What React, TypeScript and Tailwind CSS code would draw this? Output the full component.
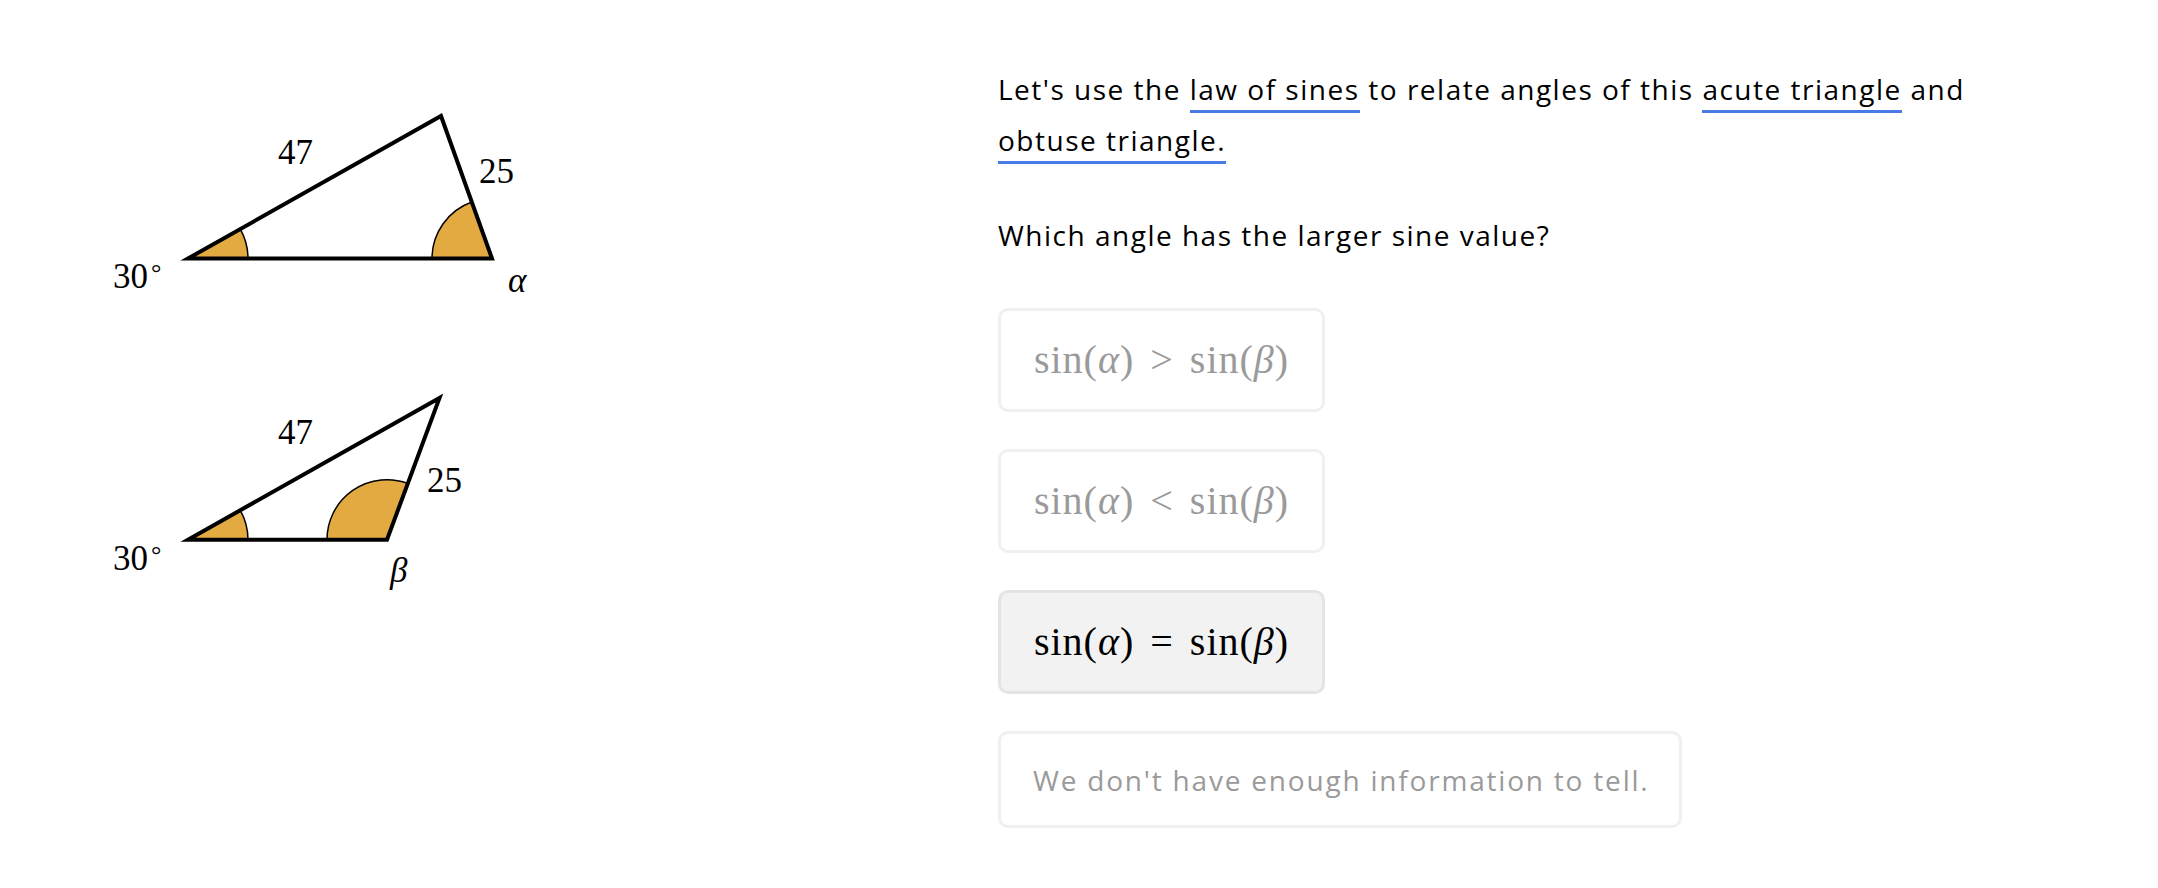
import React from 'react';

const ORANGE = '#E4AA42';

// Filled angle marker
const Sector: React.FC<{ d: string }> = ({ d }) => (
  <path d={d} fill={ORANGE} stroke="#000" strokeWidth={1.5} />
);

const Triangles: React.FC = () => (
  <svg width="560" height="620" viewBox="0 0 560 620" className="block">
    {/* acute triangle */}
    <Sector d="M188 258.5 L248 258.5 A60 60 0 0 0 240.3 229.1 Z" />
    <Sector d="M492 258.5 L432 258.5 A60 60 0 0 1 471.8 202 Z" />
    <polygon points="188,258.5 441,116 492,258.5" fill="none" stroke="#000" strokeWidth={4} strokeLinejoin="miter" />

    {/* obtuse triangle */}
    <Sector d="M188 539.7 L248 539.7 A60 60 0 0 0 240.3 510.3 Z" />
    <Sector d="M387 539.7 L327 539.7 A60 60 0 0 1 407.8 483.4 Z" />
    <polygon points="188,539.7 439.5,398 387,539.7" fill="none" stroke="#000" strokeWidth={4} strokeLinejoin="miter" />

    <g fontFamily="'Liberation Serif', 'DejaVu Serif', serif" fontSize="35" fill="#000">
      <text x="278" y="164">47</text>
      <text x="479" y="183">25</text>
      <text x="113" y="288">30</text>
      <text x="151" y="281" fontSize="26">°</text>
      <text x="508" y="292" fontStyle="italic">α</text>

      <text x="278" y="444">47</text>
      <text x="427" y="492">25</text>
      <text x="113" y="570">30</text>
      <text x="151" y="563" fontSize="26">°</text>
      <text x="390" y="582" fontStyle="italic">β</text>
    </g>
  </svg>
);

const SinExpr: React.FC<{ op: string }> = ({ op }) => (
  <span className="flex items-center font-['Liberation_Serif',serif] text-[40px] leading-none tracking-[1px]">
    <span>sin(<i>α</i>)</span>
    <span className="mx-[16px]">{op}</span>
    <span>sin(<i>β</i>)</span>
  </span>
);

const options = [
  { op: '>', selected: false },
  { op: '<', selected: false },
  { op: '=', selected: true },
];

const Term: React.FC<{ children: React.ReactNode }> = ({ children }) => (
  <span className="border-b-[3px] border-[#4A7AE6] pb-[2px]">{children}</span>
);

export default function App() {
  return (
    <div className="flex w-[2158px] h-[888px] bg-white">
      <div className="w-[998px] shrink-0">
        <Triangles />
      </div>

      <div className="w-[1010px] pt-[64px] font-['Open_Sans',sans-serif] text-[28px] tracking-[1.5px] text-black">
        <p className="leading-[51px]">
          Let's use the <Term>law of sines</Term> to relate angles of this <Term>acute triangle</Term> and{' '}
          <Term>obtuse triangle.</Term>
        </p>

        <p className="mt-[44px] leading-[51px]">Which angle has the larger sine value?</p>

        <div className="mt-[47px] flex flex-col items-start gap-[37px]">
          {options.map((o) => (
            <div
              key={o.op}
              className={`flex h-[104px] w-[327px] items-center justify-center rounded-[10px] border-[3px] tracking-normal ${
                o.selected ? 'border-[#E4E4E4] bg-[#F2F2F2] text-black' : 'border-[#F0F0F0] bg-white text-[#9A9A9A]'
              }`}
            >
              <SinExpr op={o.op} />
            </div>
          ))}
          <div className="flex h-[97px] w-[684px] items-center whitespace-nowrap rounded-[10px] border-[3px] border-[#F0F0F0] pl-[32px] tracking-[1.8px] text-[#9A9A9A]">
            We don't have enough information to tell.
          </div>
        </div>
      </div>
    </div>
  );
}
